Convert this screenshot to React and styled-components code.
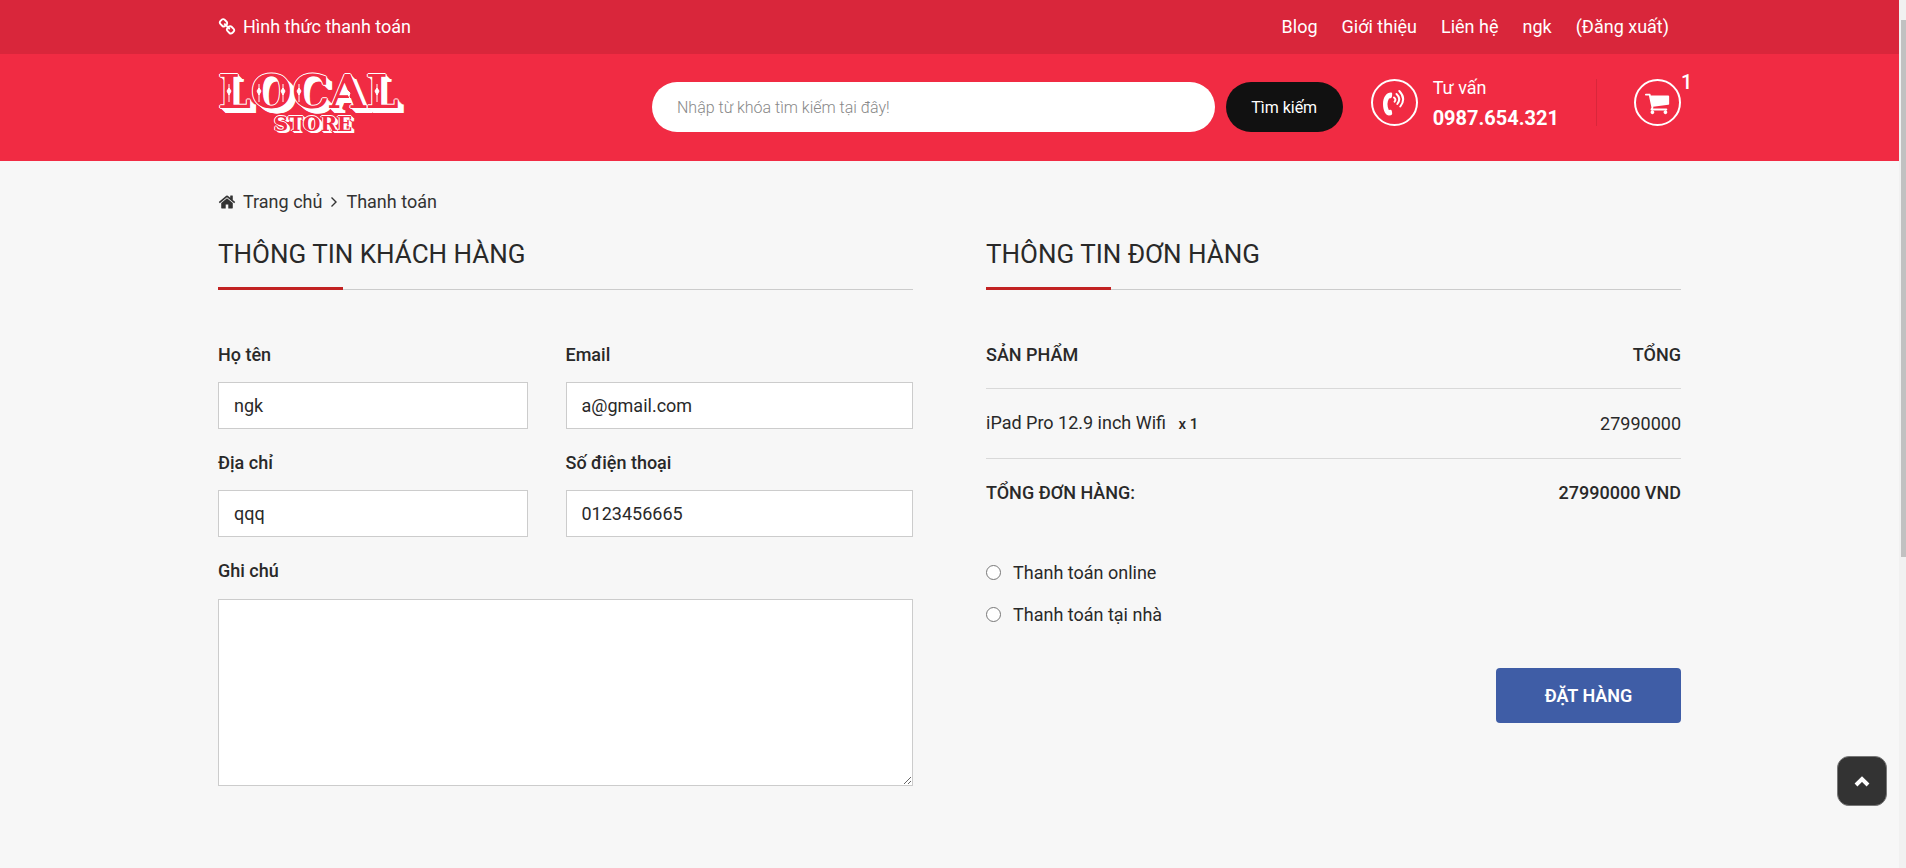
import React, { useState } from "react";
import styled, { createGlobalStyle } from "styled-components";

const GlobalStyle = createGlobalStyle`
  * {
    box-sizing: border-box;
  }

  body {
    margin: 0;
    background-color: #f7f7f7;
    color: #292929;
    font-family: Roboto, "Noto Sans", sans-serif;
    font-size: 18px;
    font-weight: 400;
    line-height: 26px;
  }

  a {
    color: inherit;
    text-decoration: none;
  }

  input,
  textarea,
  button {
    font-family: inherit;
    font-weight: inherit;
    color: inherit;
  }
`;

const icons = {
  link: "M1520 1216q0-40-28-68l-208-208q-28-28-68-28-42 0-72 32 3 3 19 18.5t21.5 21.5 15 19 13 25.5 3.5 27.5q0 40-28 68t-68 28q-15 0-27.5-3.5t-25.5-13-19-15-21.5-21.5-18.5-19q-33 31-33 73 0 40 28 68l206 207q27 27 68 27 40 0 68-26l147-146q28-28 28-67zm-703-705q0-40-28-68l-206-207q-28-28-68-28-39 0-68 27l-147 146q-28 28-28 67 0 40 28 68l208 208q27 27 68 27 42 0 72-31-3-3-19-18.5t-21.5-21.5-15-19-13-25.5-3.5-27.5q0-40 28-68t68-28q15 0 27.5 3.5t25.5 13 19 15 21.5 21.5 18.5 19q33-31 33-73zm895 705q0 120-85 203l-147 146q-83 83-203 83-121 0-204-85l-206-207q-83-83-83-203 0-123 88-209l-88-88q-86 88-208 88-120 0-204-84l-208-208q-84-84-84-204t85-203l147-146q83-83 203-83 121 0 204 85l206 207q83 83 83 203 0 123-88 209l88 88q86-88 208-88 120 0 204 84l208 208q84 84 84 204z",
  home: "M1472 992v480q0 26-19 45t-45 19h-384v-384h-256v384h-384q-26 0-45-19t-19-45v-480q0-1 .5-3t.5-3l575-474 575 474q1 2 1 6zm223-69l-62 74q-8 9-21 11h-3q-13 0-21-7l-692-577-692 577q-12 8-24 7-13-2-21-11l-62-74q-8-10-7-23.5t11-21.5l719-599q32-26 76-26t76 26l244 204v-195q0-14 9-23t23-9h192q14 0 23 9t9 23v408l219 182q10 8 11 21.5t-7 23.5z",
  cart: "M640 1536q0 52-38 90t-90 38-90-38-38-90 38-90 90-38 90 38 38 90zm896 0q0 52-38 90t-90 38-90-38-38-90 38-90 90-38 90 38 38 90zm128-1088v512q0 24-16.5 42.5t-40.5 21.5l-1044 122q13 60 13 70 0 16-24 64h920q26 0 45 19t19 45-19 45-45 19h-1024q-26 0-45-19t-19-45q0-11 8-31.5t16-36 21.5-40 15.5-29.5l-177-823h-204q-26 0-45-19t-19-45 19-45 45-19h256q16 0 28.5 6.5t19.5 15.5 13 24.5 8 26 5.5 29.5 4.5 26h1201q26 0 45 19t19 45z",
};

const Icon = ({ name, size }) => (
  <svg width={size} height={size} viewBox="0 0 1792 1792" fill="currentColor" aria-hidden="true">
    <path d={icons[name]} />
  </svg>
);

const PhoneIcon = () => (
  <svg width="24" height="28" viewBox="0 0 24 28" aria-hidden="true">
    <path
      fill="currentColor"
      d="M9 3.5C4.500 3.500 1 8 1 15s3 11.500 6 11.500l2-.3q1.300-.4 1.200-2L9.800 22q-.3-1.300-1.500-1.200l-1.500.2C5 17 5 13 7 9.500l1.500-.3q1.500-.4 1.500-2l.2-2.400Q10.200 3.500 9 3.500z"
    />
    <g fill="none" stroke="currentColor" strokeWidth="2" strokeLinecap="round">
      <path d="M12 8.500q2.500 1.800.6 4.200" />
      <path d="M14.500 5q5 4.500.8 10" />
      <path d="M17.300 2q7.200 7.500 1 15.500" />
    </g>
  </svg>
);

const StoreLogo = () => (
  <Logo>
    <LogoName>LOCAL</LogoName>
    <LogoSub>STORE</LogoSub>
    <LogoOrnament viewBox="0 0 190 46" aria-hidden="true">
      {[11, 41, 65, 81, 159].map((x) => (
        <path key={x} d={`M${x} 14v18M${x} 18l2 3-2 4-2-4z`} />
      ))}
      <path d="M127 16l7 18M129 20l3 3-1 3-2-2z" />
    </LogoOrnament>
  </Logo>
);

const Header = () => (
  <header>
    <TopBar>
      <TopContent>
        <IconLink href="#payment">
          <Icon name="link" size={18} />
          Hình thức thanh toán
        </IconLink>
        <Nav>
          <a href="#blog">Blog</a>
          <a href="#about">Giới thiệu</a>
          <a href="#contact">Liên hệ</a>
          <a href="#account">ngk</a>
          <a href="#logout">(Đăng xuất)</a>
        </Nav>
      </TopContent>
    </TopBar>
    <MainBar>
      <MainContent>
        <LogoLink href="#home">
          <StoreLogo />
        </LogoLink>
        <SearchForm onSubmit={(e) => e.preventDefault()}>
          <SearchInput
            type="text"
            aria-label="Tìm kiếm"
            placeholder="Nhập từ khóa tìm kiếm tại đây!"
          />
          <SearchButton type="submit">Tìm kiếm</SearchButton>
        </SearchForm>
        <Hotline>
          <Circle>
            <PhoneIcon />
          </Circle>
          <HotlineText>
            <span>Tư vấn</span>
            <strong>0987.654.321</strong>
          </HotlineText>
        </Hotline>
        <CartLink href="#cart" aria-label="Giỏ hàng">
          <Circle>
            <Icon name="cart" size={26} />
          </Circle>
          <CartCount>1</CartCount>
        </CartLink>
      </MainContent>
    </MainBar>
  </header>
);

const CustomerForm = () => {
  const [customer, setCustomer] = useState({
    name: "ngk",
    email: "a@gmail.com",
    address: "qqq",
    phone: "0123456665",
    note: "",
  });

  const handleChange = (e) => {
    setCustomer({ ...customer, [e.target.name]: e.target.value });
  };

  const field = (name, label, type) => (
    <Field>
      <label htmlFor={name}>{label}</label>
      <TextInput id={name} name={name} type={type} value={customer[name]} onChange={handleChange} />
    </Field>
  );

  return (
    <section>
      <Heading>Thông tin khách hàng</Heading>
      <Fields>
        {field("name", "Họ tên", "text")}
        {field("email", "Email", "email")}
        {field("address", "Địa chỉ", "text")}
        {field("phone", "Số điện thoại", "tel")}
        <Field $wide>
          <label htmlFor="note">Ghi chú</label>
          <NoteInput id="note" name="note" value={customer.note} onChange={handleChange} />
        </Field>
      </Fields>
    </section>
  );
};

const OrderInfo = () => {
  const [payment, setPayment] = useState("");

  const handlePayment = (e) => {
    setPayment(e.target.value);
  };

  return (
    <section>
      <Heading>Thông tin đơn hàng</Heading>
      <OrderTable>
        <thead>
          <tr>
            <th>SẢN PHẨM</th>
            <th>TỔNG</th>
          </tr>
        </thead>
        <tbody>
          <tr>
            <td>
              iPad Pro 12.9 inch Wifi <Quantity>x 1</Quantity>
            </td>
            <td>27990000</td>
          </tr>
        </tbody>
        <tfoot>
          <tr>
            <th>TỔNG ĐƠN HÀNG:</th>
            <th>27990000 VND</th>
          </tr>
        </tfoot>
      </OrderTable>
      <Payments>
        <label>
          <input type="radio" name="payment" value="online" checked={payment === "online"} onChange={handlePayment} />
          Thanh toán online
        </label>
        <label>
          <input type="radio" name="payment" value="home" checked={payment === "home"} onChange={handlePayment} />
          Thanh toán tại nhà
        </label>
      </Payments>
      <OrderButton type="button">ĐẶT HÀNG</OrderButton>
    </section>
  );
};

const App = () => {
  return (
    <Layout>
      <GlobalStyle />
      <Page>
        <Header />
        <Container as="main">
          <Breadcrumb aria-label="breadcrumb">
            <IconLink href="#home">
              <Icon name="home" size={18} />
              Trang chủ
            </IconLink>
            <svg width="8" height="12" viewBox="0 0 8 12" fill="none" stroke="currentColor" strokeWidth="1.4" aria-hidden="true">
              <path d="M1.500 1.500L6 6l-4.500 4.500" />
            </svg>
            <span>Thanh toán</span>
          </Breadcrumb>
          <Columns>
            <CustomerForm />
            <OrderInfo />
          </Columns>
        </Container>
        <BackToTop type="button" aria-label="Lên đầu trang" onClick={() => window.scrollTo(0, 0)}>
          <svg width="16" height="12" viewBox="0 0 16 12" fill="none" stroke="#fff" strokeWidth="4">
            <path d="M2 10l6-6 6 6" />
          </svg>
        </BackToTop>
      </Page>
      <ScrollTrack aria-hidden="true">
        <ScrollThumb />
      </ScrollTrack>
    </Layout>
  );
};

const Layout = styled.div`
  display: flex;
  min-height: 100vh;
`;

const Page = styled.div`
  flex: 1;
  min-width: 0;
`;

const ScrollTrack = styled.div`
  flex: none;
  width: 7px;
  padding: 20px 0 0 2px;
  background-color: #f1f1f1;
`;

const ScrollThumb = styled.div`
  height: 537px;
  background-color: #c1c1c1;
`;

const Container = styled.div`
  width: 100%;
  max-width: 1503px;
  margin: 0 auto;
  padding: 0 20px;
`;

const TopBar = styled.div`
  padding: 14px 0;
  background-color: #d9263b;
  color: #fff;
`;

const TopContent = styled(Container)`
  display: flex;
  justify-content: space-between;
`;

const IconLink = styled.a`
  display: flex;
  align-items: center;
  gap: 7px;
`;

const Nav = styled.nav`
  display: flex;
  gap: 24px;
  padding-right: 12px;
`;

const MainBar = styled.div`
  background-color: #f12b43;
  color: #fff;
`;

const MainContent = styled(Container)`
  display: flex;
  align-items: flex-start;
  padding-top: 16px;
  padding-bottom: 28px;
`;

const LogoLink = styled.a`
  display: flex;
  flex: 0 0 434px;
`;

const Logo = styled.span`
  position: relative;
  display: flex;
  flex-direction: column;
  align-items: center;
  gap: 1px;
  width: 190px;
  color: #f12b43;
  font-family: "DejaVu Serif", serif;
  font-weight: 700;
`;

const LogoName = styled.span`
  align-self: flex-start;
  font-size: 47px;
  line-height: 44px;
  text-shadow:
    -1px 0 #fff,
    0 -1px #fff,
    1px 0 #fff,
    0 1px #fff,
    1px 1px #fff,
    2px 2px #fff,
    3px 3px #fff,
    4px 4px #fff,
    5px 5px #fff,
    6px 5px #fff;
`;

const LogoSub = styled.span`
  font-size: 20px;
  line-height: 18px;
  text-shadow:
    -1px 0 #fff,
    0 -1px #fff,
    1px 0 #fff,
    1px 1px #fff,
    2px 1px #fff,
    2px 2px #fff,
    3px 2px #fff;
`;

const LogoOrnament = styled.svg`
  position: absolute;
  top: 0;
  left: 0;
  width: 190px;
  height: 46px;
  fill: #fff;
  stroke: #fff;
`;

const SearchForm = styled.form`
  display: flex;
  flex: 1;
  gap: 11px;
  padding-top: 12px;
`;

const SearchInput = styled.input`
  flex: 1;
  min-width: 0;
  height: 50px;
  padding: 0 25px;
  border: none;
  border-radius: 25px;
  background-color: #fff;
  color: #292929;
  font-size: 16px;
  font-weight: 300;

  &::placeholder {
    color: #888;
  }
`;

const SearchButton = styled.button`
  width: 117px;
  height: 50px;
  border: none;
  border-radius: 25px;
  background-color: #111;
  font-size: 16px;
  cursor: pointer;
`;

const Circle = styled.span`
  display: flex;
  flex: none;
  align-items: center;
  justify-content: center;
  width: 47px;
  height: 47px;
  border: 2px solid #fff;
  border-radius: 50%;
`;

const Hotline = styled.div`
  display: flex;
  gap: 15px;
  margin: 9px 37px 0 28px;
  padding-right: 37px;
  border-right: 1px solid #d9263b;
`;

const HotlineText = styled.div`
  display: flex;
  flex-direction: column;
  gap: 4px;
  height: 48px;
  margin-top: -4px;

  strong {
    font-size: 20px;
    font-weight: 700;
  }
`;

const CartLink = styled.a`
  position: relative;
  display: flex;
  margin-top: 9px;
`;

const CartCount = styled.span`
  position: absolute;
  top: -10px;
  left: 47px;
  font-weight: 500;
  font-size: 20px;
`;

const Breadcrumb = styled.nav`
  display: flex;
  align-items: center;
  gap: 8px;
  padding-top: 28px;
  color: #333;
`;

const Columns = styled.div`
  display: grid;
  grid-template-columns: 1fr 1fr;
  gap: 73px;
  padding: 21px 0 80px;

  @media (max-width: 900px) {
    grid-template-columns: 1fr;
  }
`;

const Heading = styled.h2`
  position: relative;
  margin: 0;
  padding-bottom: 17px;
  border-bottom: 1px solid #ccc;
  font-size: 26px;
  font-weight: 400;
  line-height: 36px;
  text-transform: uppercase;

  &::after {
    content: "";
    position: absolute;
    bottom: -1px;
    left: 0;
    width: 125px;
    height: 3px;
    background-color: #c22222;
  }
`;

const Fields = styled.form`
  display: grid;
  grid-template-columns: calc(50% - 38px) 50%;
  gap: 21px 38px;
  padding-top: 52px;
`;

const Field = styled.div`
  display: flex;
  flex-direction: column;
  gap: ${(props) => (props.$wide ? "15px" : "14px")};
  grid-column: ${(props) => (props.$wide ? "1 / -1" : "auto")};

  label {
    font-weight: 500;
  }
`;

const TextInput = styled.input`
  width: 100%;
  height: 47px;
  padding: 0 15px;
  border: 1px solid #ccc;
  background-color: #fff;
  font-size: 18px;
`;

const NoteInput = styled.textarea`
  width: 100%;
  height: 187px;
  padding: 10px 15px;
  border: 1px solid #ccc;
  background-color: #fff;
  font-size: 18px;
`;

const OrderTable = styled.table`
  width: 100%;
  margin-top: 32px;
  border-collapse: separate;
  border-spacing: 0;

  th,
  td {
    height: 70px;
    padding: 0;
    text-align: left;
  }

  th {
    font-weight: 500;
  }

  thead th {
    height: 67px;
  }

  tfoot th {
    height: 68px;
  }

  thead th,
  tbody td {
    border-bottom: 1px solid #d9d9d9;
  }

  th:last-child,
  td:last-child {
    text-align: right;
  }
`;

const Quantity = styled.span`
  margin-left: 8px;
  font-size: 15px;
  font-weight: 500;
`;

const Payments = styled.div`
  display: flex;
  flex-direction: column;
  align-items: flex-start;
  gap: 16px;
  margin-top: 33px;

  label {
    display: flex;
    align-items: center;
    gap: 12px;
  }

  input {
    width: 15px;
    height: 15px;
    margin: 0 0 2px;
  }
`;

const OrderButton = styled.button`
  display: block;
  width: 185px;
  height: 55px;
  margin: 40px 0 0 auto;
  border: none;
  border-radius: 4px;
  background-color: #3f5da6;
  color: #fff;
  font-size: 18px;
  font-weight: 600;
  cursor: pointer;
`;

const BackToTop = styled.button`
  position: fixed;
  right: 19px;
  bottom: 62px;
  display: flex;
  align-items: center;
  justify-content: center;
  width: 50px;
  height: 50px;
  border: 1px solid #777;
  border-radius: 12px;
  background-color: #333;
  cursor: pointer;
`;

export default App;
